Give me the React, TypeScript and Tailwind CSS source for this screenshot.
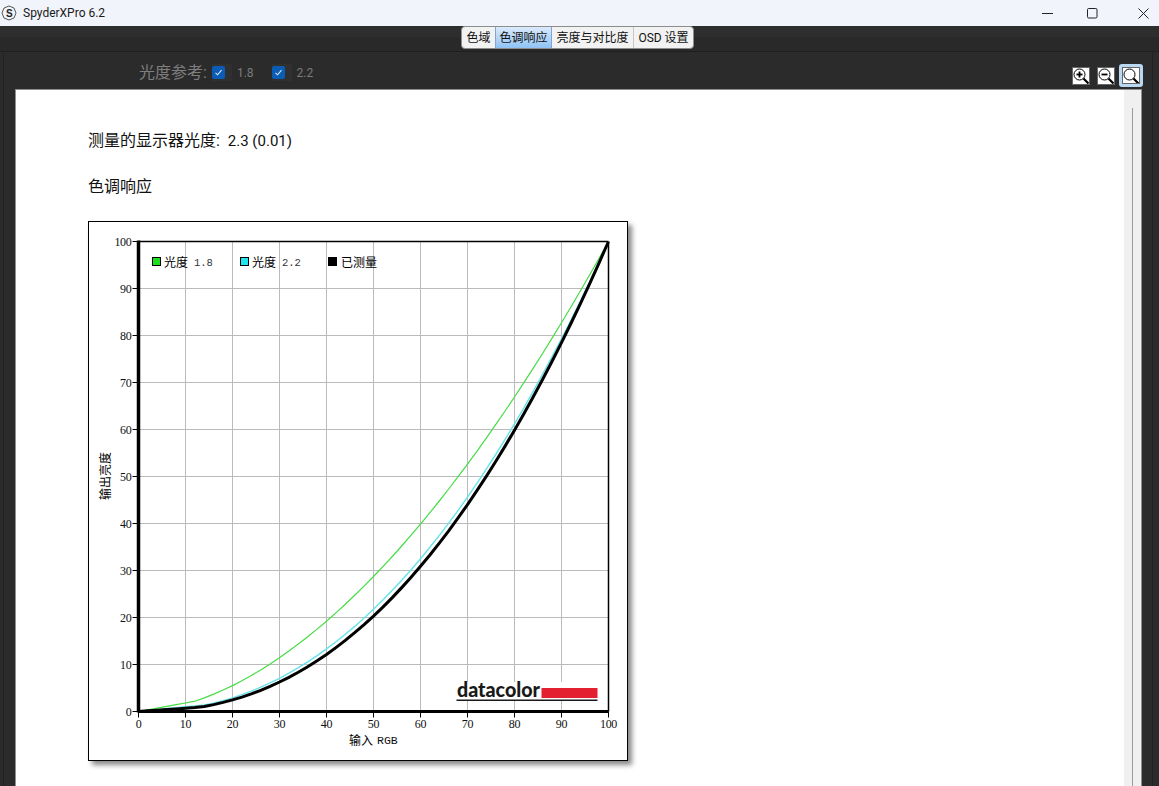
import React from 'react';

const X0 = 49.5;
const Y0 = 489.5;
const U = 4.7;
const ticks = [0, 10, 20, 30, 40, 50, 60, 70, 80, 90, 100];

const px = (v: number) => X0 + v * U;
const py = (v: number) => Y0 - v * U;

const curve = (gamma: number, toe: number) => {
  const pts: string[] = [];
  for (let i = 0; i <= 100; i += 2) {
    const out = Math.max(100 * Math.pow(i / 100, gamma), i * toe);
    pts.push(`${px(i).toFixed(1)},${py(out).toFixed(1)}`);
  }
  return pts.join(' ');
};

const chartFont = '"Liberation Serif", "Noto Sans CJK SC", serif';
const monoFont = '"Liberation Mono", monospace';

const ToneChart = () => (
  <svg width="538" height="538" viewBox="0 0 538 538" className="block">
    {ticks.slice(1).map((t) => (
      <g key={t} stroke="#bbbbbb" strokeWidth="1">
        <line x1={px(t)} y1={py(100)} x2={px(t)} y2={py(0)} />
        <line x1={px(0)} y1={py(t)} x2={px(100)} y2={py(t)} />
      </g>
    ))}

    {/* logo sits on a white patch */}
    <rect x="366" y="460" width="146" height="18" fill="#ffffff" />

    <line x1={px(0)} y1={py(100)} x2={px(100)} y2={py(100)} stroke="#000" strokeWidth="1.5" />
    <line x1={px(100)} y1={py(100)} x2={px(100)} y2={py(0)} stroke="#000" strokeWidth="1.5" />

    <polyline points={curve(1.8, 0.18)} fill="none" stroke="#45dc45" strokeWidth="1.2" />
    <polyline points={curve(2.2, 0.1)} fill="none" stroke="#66e2ea" strokeWidth="1.4" />
    <polyline points={curve(2.3, 0.07)} fill="none" stroke="#000" strokeWidth="3" />

    <line x1={px(0)} y1={py(100) - 1} x2={px(0)} y2={py(0) + 1} stroke="#000" strokeWidth="3.5" />
    <line x1={px(0)} y1={py(0)} x2={px(100)} y2={py(0)} stroke="#000" strokeWidth="3" />

    {ticks.map((t) => (
      <g key={t} fontFamily={chartFont} fontSize="12" letterSpacing="-0.3" fill="#111">
        <line x1={px(0) - 6} y1={py(t)} x2={px(0)} y2={py(t)} stroke="#000" strokeWidth="1" />
        <line x1={px(t)} y1={py(0)} x2={px(t)} y2={py(0) + 6} stroke="#000" strokeWidth="1" />
        <text x={px(0) - 7} y={py(t) + 4.5} textAnchor="end">{t}</text>
        <text x={px(t)} y={py(0) + 16} textAnchor="middle">{t}</text>
      </g>
    ))}

    {/* legend */}
    <g fontFamily={chartFont} fontSize="12" fill="#000">
      <rect x="63.5" y="35.5" width="8" height="8" fill="#1fdc1f" stroke="#000" />
      <text x="75" y="45">光度</text>
      <text x="105" y="44" fontFamily={monoFont} fontSize="10.5" fill="#333">1.8</text>
      <rect x="151.5" y="35.5" width="8" height="8" fill="#22e5f0" stroke="#000" />
      <text x="163" y="45">光度</text>
      <text x="193" y="44" fontFamily={monoFont} fontSize="10.5" fill="#333">2.2</text>
      <rect x="239.5" y="35.5" width="8" height="8" fill="#000" stroke="#000" />
      <text x="252" y="45">已测量</text>
    </g>

    {/* axis titles */}
    <text x="260" y="523" fontFamily={chartFont} fontSize="12" fill="#000">输入</text>
    <text x="288" y="522" fontFamily={monoFont} fontSize="11.5" fill="#111">RGB</text>
    <text transform="translate(21 278) rotate(-90)" fontFamily={chartFont} fontSize="12" fill="#000">输出亮度</text>

    {/* datacolor mark */}
    <text x="368" y="475" fontFamily="Lato, sans-serif" fontWeight="900" fontSize="21" fill="#1a1a1a" textLength="83" lengthAdjust="spacingAndGlyphs">datacolor</text>
    <rect x="452.5" y="466" width="56" height="10" fill="#e3202f" />
    <rect x="367.5" y="477.5" width="141" height="1.5" fill="#1a1a1a" />
  </svg>
);

const Check = ({ label }: { label: string }) => (
  <span className="flex items-center">
    <span className="flex h-[17px] w-[20px] items-center bg-[#303030]">
      <span className="flex h-[13px] w-[13px] items-center justify-center rounded-[2px] bg-[#0b5cb5]">
        <svg width="9" height="9" viewBox="0 0 9 9" fill="none" stroke="#dbe9f7" strokeWidth="1.1">
          <path d="M1.5 4.8 L3.6 6.8 L7.5 2.2" />
        </svg>
      </span>
    </span>
    <span className="ml-[5px] text-[12px] text-[#7b7b7b]">{label}</span>
  </span>
);

const Lens = ({ mark }: { mark?: 'plus' | 'minus' }) => (
  <svg width="16" height="16" viewBox="0 0 16 16" fill="none" stroke="#000">
    <circle cx="6.5" cy="6.5" r="5.5" strokeWidth="1" />
    <path d="M10.5 10.5 L15.5 15.5" strokeWidth="2.2" />
    {mark && <path d="M3.5 6.5 H9.5" strokeWidth="1.8" />}
    {mark === 'plus' && <path d="M6.5 3.5 V9.5" strokeWidth="1.8" />}
  </svg>
);

export default function App() {
  return (
    <div className="flex h-[786px] w-[1159px] flex-col overflow-hidden bg-[#2b2b2b] font-['Roboto','Noto_Sans_CJK_SC',sans-serif]">
      {/* Title bar */}
      <div className="flex h-[26px] shrink-0 items-center bg-[#f1f4fa] pl-[1px]">
        <svg width="16" height="16" viewBox="0 0 16 16" fill="none" stroke="#444" strokeWidth="0.9">
          <path d="M8 1 L13 3 L15 8 L13 13 L8 15 L3 13 L1 8 L3 3 Z" />
          <text x="5" y="11.5" fontSize="10" fontWeight="700" fill="#222" stroke="none" fontFamily='"Liberation Sans", sans-serif'>S</text>
        </svg>
        <span className="ml-[6px] text-[12px] text-[#1a1a1a]">SpyderXPro 6.2</span>
        <div className="ml-auto flex items-center pr-[10px]">
          <svg width="11" height="11" viewBox="0 0 11 11" stroke="#222" fill="none">
            <path d="M0 5.5 H11" />
          </svg>
          <svg width="11" height="11" viewBox="0 0 11 11" stroke="#222" fill="none" className="ml-[34px]">
            <rect x="0.5" y="0.5" width="9.5" height="9.5" rx="1.2" />
          </svg>
          <svg width="11" height="11" viewBox="0 0 11 11" stroke="#222" fill="none" className="ml-[40px]">
            <path d="M0.5 0.5 L10.5 10.5 M10.5 0.5 L0.5 10.5" />
          </svg>
        </div>
      </div>

      {/* Tabs band */}
      <div className="flex h-[26px] shrink-0 justify-center border-b border-[#1f1f1f] bg-[linear-gradient(#2e2e2e_0,#2e2e2e_45%,#292929_46%,#292929_100%)] pr-[4px]">
        <div className="flex h-[23px] items-stretch self-start overflow-hidden rounded-[4px] border border-[#8d8d8d] bg-[#f2f2f2] text-[12px] text-[#111]">
          <span className="flex w-[33px] items-center justify-center">色域</span>
          <span className="flex w-[57px] items-center justify-center border-x border-[#7ea6d0] bg-[linear-gradient(#dbeafb,#8fc3f5)]">色调响应</span>
          <span className="flex w-[82px] items-center justify-center border-r border-[#c8c8c8]">亮度与对比度</span>
          <span className="flex w-[59px] items-center justify-center">OSD 设置</span>
        </div>
      </div>

      {/* Main panel */}
      <div className="ml-[3px] mr-[6px] flex min-h-0 flex-1 flex-col border-x border-[#222] pl-[11px]">
        <div className="flex h-[37px] shrink-0 items-center pl-[124px] pt-[4px]">
          <span className="text-[16px] text-[#7f7f7f]">光度参考:</span>
          <span className="ml-[5px] flex items-center gap-[18px]">
            <Check label="1.8" />
            <Check label="2.2" />
          </span>
          <span className="ml-auto mt-[6px] flex items-center gap-[7px] pr-[9px]">
            <span className="flex h-[18px] w-[18px] items-center justify-center border border-[#666] bg-white"><Lens mark="plus" /></span>
            <span className="flex h-[18px] w-[18px] items-center justify-center border border-[#666] bg-white"><Lens mark="minus" /></span>
            <span className="ml-[-3px] flex h-[23px] w-[24px] items-center justify-center rounded-[3px] border-[3px] border-[#b9d8f2] bg-white outline outline-1 outline-offset-[-4px] outline-[#666]"><Lens /></span>
          </span>
        </div>

        {/* Report page */}
        <div className="mr-[10px] flex min-h-0 flex-1 border-l border-r border-t border-[#8f8f8f] bg-white">
          <div className="min-w-0 flex-1 pl-[72px] pt-[41px] text-[16px] text-[#111]">
            <p className="leading-[20px]">测量的显示器光度:&nbsp; <span className="text-[15px]">2.3 (0.01)</span></p>
            <p className="mt-[26px] leading-[20px]">色调响应</p>
            <div className="mt-[24px] w-[540px] border border-black bg-white shadow-[4px_4px_5px_#8a8a8a]">
              <ToneChart />
            </div>
          </div>
          <div className="flex w-[17px] shrink-0 justify-center bg-[#f0f0f0] pt-[18px]">
            <div className="h-full w-[1px] bg-[#9a9a9a]" />
          </div>
        </div>
      </div>
    </div>
  );
}
